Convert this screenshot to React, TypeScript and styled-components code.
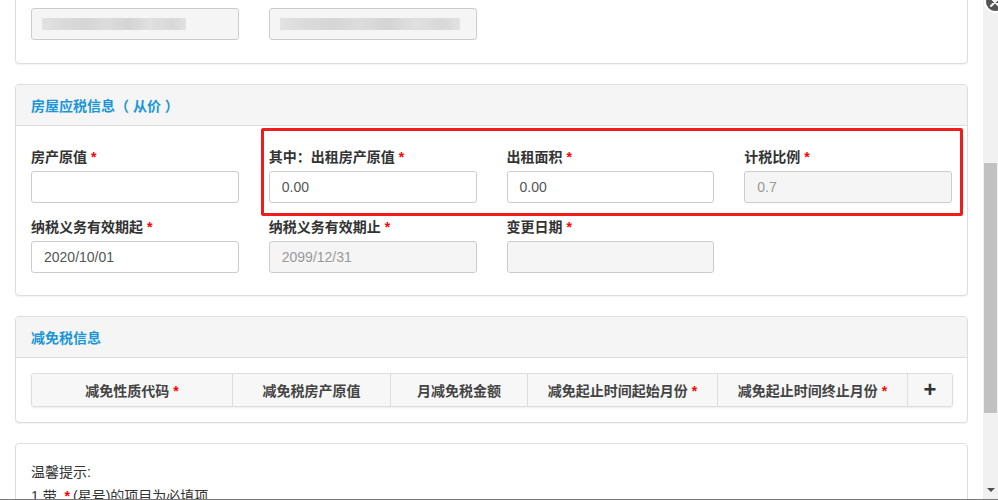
import React from "react";
import styled, { createGlobalStyle } from "styled-components";

const GlobalStyle = createGlobalStyle`
  html, body {
    margin: 0;
    padding: 0;
    overflow: hidden;
    background: #fff;
  }
  body {
    font-family: "Liberation Sans", "Noto Sans CJK SC", sans-serif;
    font-size: 14px;
    color: #333;
  }
  * { box-sizing: border-box; }
`;

const Page = styled.div`
  position: relative;
  display: flex;
  height: 500px;
  overflow: hidden;
`;

const Main = styled.div`
  flex: 1;
  display: flex;
  flex-direction: column;
  gap: 20px;
  padding: 0 15px;
  overflow: hidden;
`;

const Panel = styled.section<{ $hiddenTop?: number }>`
  position: relative;
  flex: none;
  background: #fff;
  border: 1px solid #ddd;
  border-radius: 4px;
  box-shadow: 0 1px 1px rgba(0, 0, 0, 0.05);
  margin-top: ${(p) => (p.$hiddenTop ? `-${p.$hiddenTop}px` : "0")};
`;

const PanelHeading = styled.header`
  height: 41px;
  padding: 0 15px;
  display: flex;
  align-items: center;
  background: #f5f5f5;
  border-bottom: 1px solid #ddd;
  border-radius: 3px 3px 0 0;
  color: #1a96d8;
  font-weight: 700;
  font-size: 14px;
`;

const PanelBody = styled.div<{ $pad: string }>`
  padding: ${(p) => p.$pad};
`;

const FormGrid = styled.div`
  display: grid;
  grid-template-columns: repeat(4, 1fr);
  column-gap: 30px;
  row-gap: 14px;
`;

const Field = styled.div`
  display: flex;
  flex-direction: column;
`;

const Label = styled.label`
  height: 20px;
  line-height: 20px;
  margin-bottom: 4px;
  font-weight: 700;
  color: #333;
  white-space: nowrap;
`;

const Star = styled.span<{ $gap?: number }>`
  color: #f00;
  margin-left: 4px;
  margin-right: ${(p) => p.$gap ?? 0}px;
  font-weight: 700;
`;

const Input = styled.div<{ $disabled?: boolean }>`
  height: 32px;
  padding: 0 12px;
  display: flex;
  align-items: center;
  border: 1px solid #ccc;
  border-radius: 3px;
  background: ${(p) => (p.$disabled ? "#f5f5f5" : "#fff")};
  color: ${(p) => (p.$disabled ? "#999" : "#555")};
  font-family: "Liberation Sans", sans-serif;
  font-size: 14px;
`;

const Blurred = styled.div<{ $width: number }>`
  width: ${(p) => p.$width}px;
  height: 12px;
  margin-left: -2px;
  background: linear-gradient(
    90deg,
    #e2e2e2 0%,
    #dadada 15%,
    #d6d6d6 30%,
    #dcdcdc 45%,
    #d4d4d4 60%,
    #e0e0e0 75%,
    #d8d8d8 90%,
    #e2e2e2 100%
  );
  filter: blur(0.6px);
`;

const Highlight = styled.div`
  position: absolute;
  left: 245px;
  top: 43px;
  width: 702px;
  height: 88px;
  border: 3px solid #f01c1c;
  border-radius: 2px;
  pointer-events: none;
`;

const Table = styled.table`
  width: 100%;
  border-collapse: separate;
  border-spacing: 0;
  table-layout: fixed;
  border: 1px solid #ddd;
  border-radius: 3px;
  box-shadow: 0 1px 2px rgba(0, 0, 0, 0.08);
  overflow: hidden;
`;

const Th = styled.th<{ $w: number }>`
  width: ${(p) => p.$w}px;
  height: 32px;
  padding: 0;
  background: #f7f7f7;
  border-left: 1px solid #ddd;
  font-weight: 700;
  font-size: 14px;
  color: #444;
  text-align: center;
  white-space: nowrap;
  &:first-child { border-left: none; }
`;

const Plus = styled.span`
  font-family: "Liberation Sans", sans-serif;
  font-size: 22px;
  font-weight: 700;
  color: #333;
  line-height: 1;
`;

const Notice = styled.div`
  line-height: 24px;
  color: #333;
  white-space: nowrap;
`;

const ScrollTrack = styled.div`
  position: relative;
  width: 15px;
  flex: none;
  background: #f1f1f1;
  display: flex;
  flex-direction: column;
  align-items: center;
`;

const ScrollThumb = styled.div`
  width: 13px;
  height: 250px;
  margin-top: 163px;
  background: #c1c1c1;
`;

const ScrollArrow = styled.div`
  margin-top: auto;
  margin-bottom: 8px;
  width: 0;
  height: 0;
  border-left: 4px solid transparent;
  border-right: 4px solid transparent;
  border-top: 4px solid #505050;
`;

const CloseBadge = styled.div`
  position: absolute;
  left: 984px;
  top: -9px;
  width: 22px;
  height: 22px;
  border-radius: 50%;
  background: #555;
  border: 2px solid #fff;
  display: flex;
  align-items: center;
  justify-content: center;
`;

const BottomEdge = styled.div`
  position: absolute;
  left: 0;
  right: 0;
  bottom: 0;
  height: 1px;
  background: #7a7a7a;
`;

type FieldDef = { label: string; value?: string; disabled?: boolean; required?: boolean };

const taxFields: FieldDef[] = [
  { label: "房产原值", required: true },
  { label: "其中：出租房产原值", value: "0.00", required: true },
  { label: "出租面积", value: "0.00", required: true },
  { label: "计税比例", value: "0.7", disabled: true, required: true },
  { label: "纳税义务有效期起", value: "2020/10/01", required: true },
  { label: "纳税义务有效期止", value: "2099/12/31", disabled: true, required: true },
  { label: "变更日期", disabled: true, required: true },
];

const reliefCols = [
  { title: "减免性质代码", w: 200, required: true },
  { title: "减免税房产原值", w: 158 },
  { title: "月减免税金额", w: 137 },
  { title: "减免起止时间起始月份", w: 190, required: true },
  { title: "减免起止时间终止月份", w: 190, required: true },
];

export default function App() {
  return (
    <>
      <GlobalStyle />
      <Page>
        <Main>
          <Panel $hiddenTop={40}>
            <PanelBody $pad="47px 15px 23px">
              <FormGrid>
                <Input $disabled>
                  <Blurred $width={144} />
                </Input>
                <Input $disabled>
                  <Blurred $width={180} />
                </Input>
              </FormGrid>
            </PanelBody>
          </Panel>

          <Panel>
            <PanelHeading>房屋应税信息（ 从价 ）</PanelHeading>
            <PanelBody $pad="21px 15px 22px">
              <FormGrid>
                {taxFields.map((f) => (
                  <Field key={f.label}>
                    <Label>
                      {f.label}
                      {f.required && <Star>*</Star>}
                    </Label>
                    <Input $disabled={f.disabled}>{f.value}</Input>
                  </Field>
                ))}
              </FormGrid>
            </PanelBody>
            <Highlight />
          </Panel>

          <Panel>
            <PanelHeading>减免税信息</PanelHeading>
            <PanelBody $pad="15px 15px 15px">
              <Table>
                <thead>
                  <tr>
                    {reliefCols.map((c) => (
                      <Th key={c.title} $w={c.w}>
                        {c.title}
                        {c.required && <Star>*</Star>}
                      </Th>
                    ))}
                    <Th $w={45}>
                      <Plus>+</Plus>
                    </Th>
                  </tr>
                </thead>
              </Table>
            </PanelBody>
          </Panel>

          <Panel>
            <PanelBody $pad="16px 15px 15px">
              <Notice>温馨提示:</Notice>
              <Notice>
                1.带 <Star $gap={3}>*</Star>(星号)的项目为必填项
              </Notice>
            </PanelBody>
          </Panel>
        </Main>
        <ScrollTrack>
          <ScrollThumb />
          <ScrollArrow />
        </ScrollTrack>
        <CloseBadge>
          <svg width="12" height="12" viewBox="0 0 12 12">
            <path d="M2 10 L10 2 M2 2 L10 10" stroke="#fff" strokeWidth="2" strokeLinecap="round" />
          </svg>
        </CloseBadge>
        <BottomEdge />
      </Page>
    </>
  );
}
